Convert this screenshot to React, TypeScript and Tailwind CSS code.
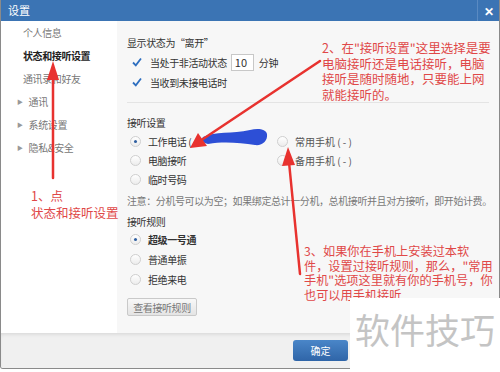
import React from "react";

const font = { fontFamily: '"Noto Sans CJK SC", "Microsoft YaHei", sans-serif' };

function Check() {
  return (
    <svg width="10" height="10" viewBox="0 0 10 10" className="shrink-0">
      <path d="M1 5.5 L3.8 8.3 L9 1.5" fill="none" stroke="#2f6fc0" strokeWidth="1.8" />
    </svg>
  );
}

function Radio({ on }: { on?: boolean }) {
  return (
    <span className="flex h-[11px] w-[11px] shrink-0 items-center justify-center rounded-full border border-[#cfcfcf] bg-gradient-to-b from-white to-[#ececec]">
      {on && <span className="h-[3px] w-[3px] rounded-full bg-[#2f5fa0]" />}
    </span>
  );
}

function RadioRow({ label, on, bold, h = "h-[19px]" }: { label: React.ReactNode; on?: boolean; bold?: boolean; h?: string }) {
  return (
    <div className={`flex ${h} items-center gap-[7px]`}>
      <Radio on={on} />
      <span className={`text-[#333] ${bold ? "font-bold" : ""}`}>{label}</span>
    </div>
  );
}

const navItems = [
  { label: "个人信息" },
  { label: "状态和接听设置", active: true },
  { label: "通讯录和好友" },
  { label: "通讯", arrow: true },
  { label: "系统设置", arrow: true },
  { label: "隐私&安全", arrow: true },
];

export default function App() {
  return (
    <div className="relative h-[372px] w-[500px] overflow-hidden bg-white" style={font}>
      <div className="flex h-[369px] flex-col overflow-hidden rounded-b-[3px] border-x border-b border-[#8a8a8a]">
        {/* title bar */}
        <div className="flex h-[21px] shrink-0 items-center bg-[#3b74b4] pl-[7px] text-[11px] text-white">
          <span className="flex-1">设置</span>
          <div className="flex h-full w-[22px] items-center justify-center border-l border-[#5a8ac2] text-[12px] font-bold">
            ✕
          </div>
        </div>

        <div className="flex h-[312px] shrink-0 text-[10px] tracking-[-0.4px]">
          {/* sidebar */}
          <div className="w-[116px] shrink-0 bg-white">
            {navItems.map((it) => (
              <div
                key={it.label}
                className={`flex h-[23px] items-center ${it.arrow ? "pl-[16px]" : "pl-[22px]"} ${
                  it.active ? "font-bold text-[#222]" : "text-[#777]"
                }`}
              >
                {it.arrow && <span className="mr-[6px] text-[6px] text-[#999]">▶</span>}
                {it.label}
              </div>
            ))}
          </div>

          {/* content */}
          <div className="flex-1 bg-[#f7f7f7] pl-[10px] pt-[12px] text-[#333]">
            <div className="flex h-[19px] items-center">显示状态为“离开”</div>
            <div className="flex h-[20px] items-center pl-[5px]">
              <Check />
              <span className="ml-[8px]">当处于非活动状态</span>
              <span className="ml-[4px] flex h-[17px] w-[23px] items-center border border-[#c8c8c8] bg-white pl-[3px] text-[11px] tracking-normal">
                10
              </span>
              <span className="ml-[5px]">分钟</span>
            </div>
            <div className="flex h-[20px] items-center pl-[5px]">
              <Check />
              <span className="ml-[8px]">当收到未接电话时</span>
            </div>
            <div className="mr-[10px] mt-[10px] border-t border-[#e4e4e4]" />
            <div className="mt-[9px] flex h-[20px] items-center">接听设置</div>
            <div className="flex pl-[3px]">
              <div className="w-[147px]">
                <RadioRow on label="工作电话 (" />
                <RadioRow label="电脑接听" />
                <RadioRow label="临时号码" />
              </div>
              <div>
                <RadioRow label={<span className="tracking-normal text-[#555]">常用手机 ( - )</span>} />
                <RadioRow label={<span className="tracking-normal text-[#555]">备用手机 ( - )</span>} />
              </div>
            </div>
            <div className="mt-[2px] flex h-[18px] items-center whitespace-nowrap text-[#777]">
              注意：分机号可以为空；如果绑定总计一分机，总机接听并且对方接听，即开始计费。
            </div>
            <div className="mt-[4px] flex h-[16px] items-center">接听规则</div>
            <div className="pl-[3px]">
              <RadioRow h="h-[20px]" on bold label="超级一号通" />
              <RadioRow h="h-[20px]" label="普通单振" />
              <RadioRow h="h-[20px]" label="拒绝来电" />
            </div>
            <button className="mt-[9px] flex h-[18px] w-[70px] items-center justify-center rounded-[2px] border border-[#c9c9c9] bg-gradient-to-b from-[#f8f8f8] to-[#e4e4e4] text-[#777]">
              查看接听规则
            </button>
          </div>
        </div>

        {/* footer */}
        <div className="flex flex-1 items-center bg-[#f0f0f0] pl-[292px] shadow-[inset_0_3px_4px_-2px_rgba(0,0,0,0.12)]">
          <button className="h-[21px] w-[55px] rounded-[3px] bg-gradient-to-b from-[#4a86c8] to-[#2f65a8] text-[10px] text-white">
            确定
          </button>
        </div>
      </div>

      {/* annotations */}
      <svg className="pointer-events-none absolute left-0 top-0" width="500" height="372">
        <path
          d="M203 137 C215 131 232 134 250 130 C258 128 266 129 267 134 C268 141 262 146 255 145 C240 143 225 141 208 144 C203 143 201 140 203 137 Z"
          fill="#2d4fd6"
        />
        <g stroke="#e8322f" strokeWidth="2.5" strokeLinecap="round">
          <line x1="53" y1="178" x2="53" y2="76" />
          <line x1="320" y1="61" x2="200" y2="141" />
          <line x1="300" y1="274" x2="289" y2="162" />
        </g>
        <g fill="#e8322f">
          <polygon points="53,61 47,80 59,80" />
          <polygon points="190,148 198,133 207,146" />
          <polygon points="288,147 282,166 295,165" />
        </g>
      </svg>

      <div className="absolute left-[31px] top-[187px] whitespace-nowrap text-[12.5px] leading-[17px] text-[#e04848]">
        1、点
        <br />
        状态和接听设置
      </div>
      <div className="absolute left-[322px] top-[40px] whitespace-nowrap text-[12.5px] leading-[15.7px] text-[#e04848]">
        2、在"接听设置"这里选择是要
        <br />
        电脑接听还是电话接听，电脑
        <br />
        接听是随时随地，只要能上网
        <br />
        就能接听的。
      </div>
      <div className="absolute left-[304px] top-[244px] whitespace-nowrap text-[12.2px] leading-[14.6px] text-[#e04848]">
        3、如果你在手机上安装过本软
        <br />
        件，设置过接听规则，那么，"常用
        <br />
        手机"选项这里就有你的手机号，你
        <br />
        也可以用手机接听
      </div>

      <div className="absolute left-[350px] top-[298px] h-[74px] w-[150px] bg-white pl-[5px] pt-[10px] text-[35px] leading-[42px] text-[#c4c4c4]">
        软件技巧
      </div>
    </div>
  );
}
